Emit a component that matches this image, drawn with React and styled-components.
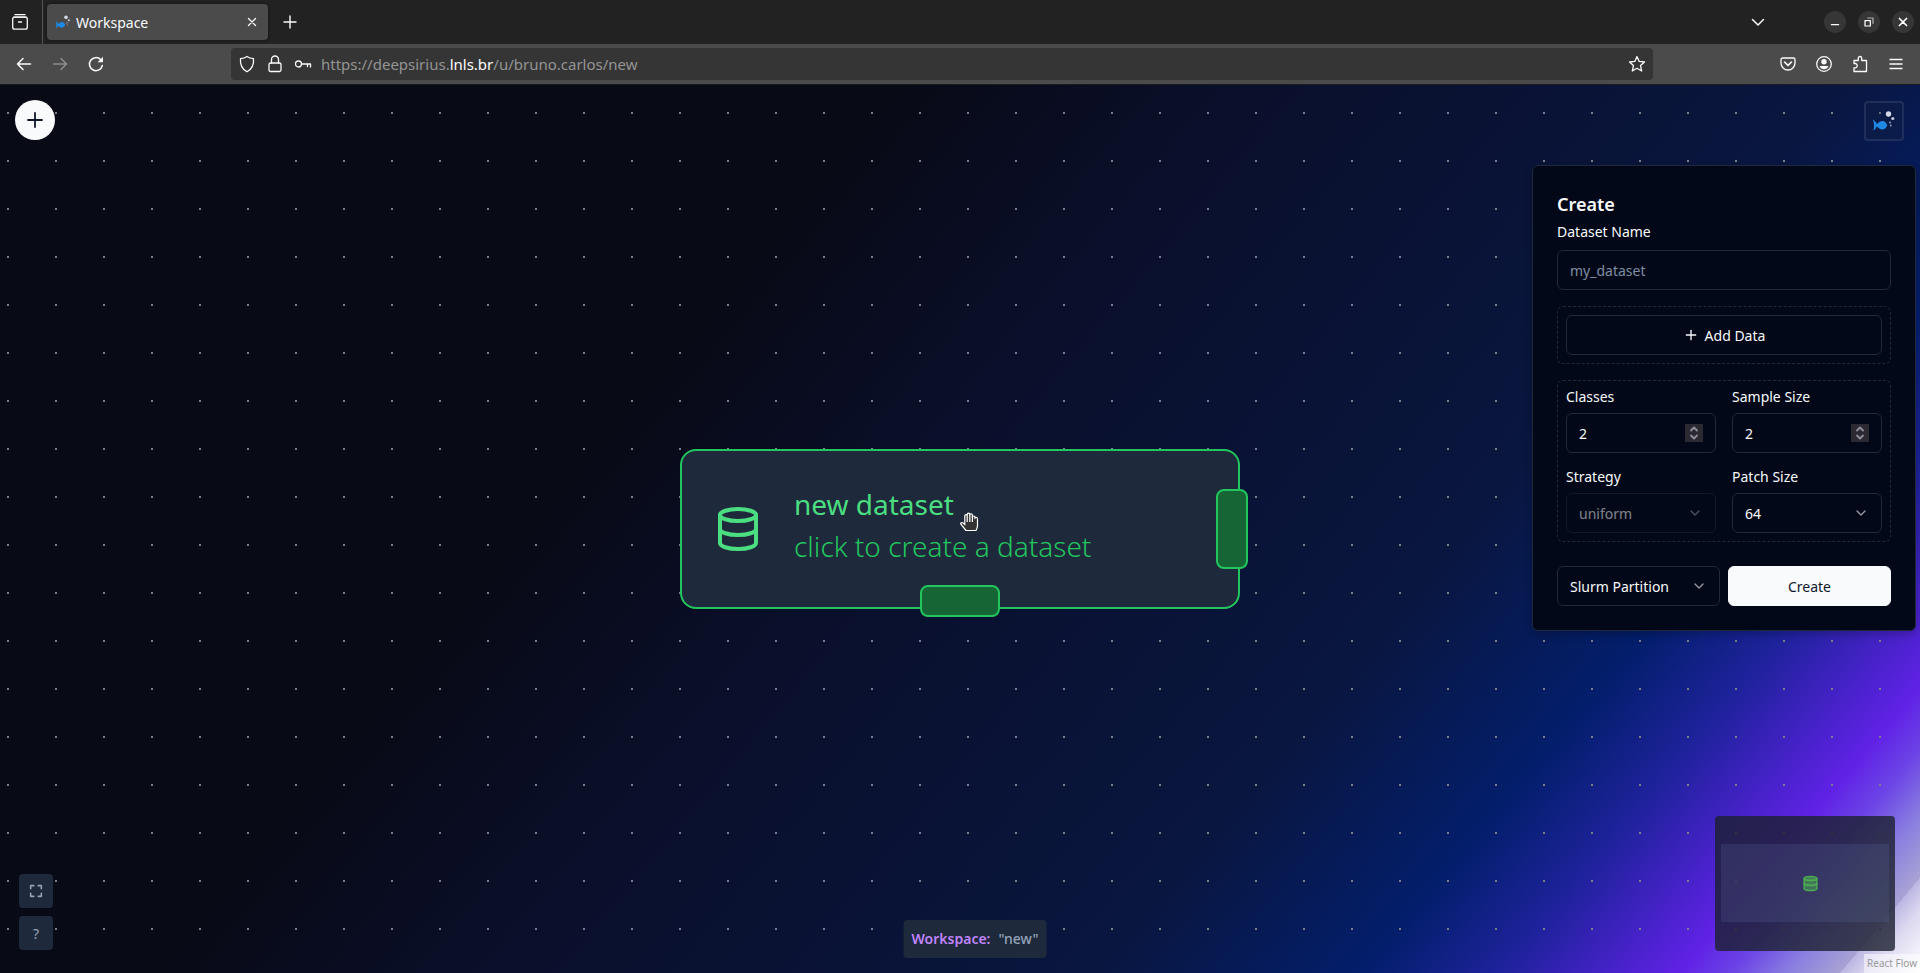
import React from "react";
import styled, { createGlobalStyle, css } from "styled-components";
import { ChevronDown, Database, Plus } from "lucide-react";

const Global = createGlobalStyle`
  *, *::before, *::after { box-sizing: border-box; }
  body { margin: 0; background: #080a16; }
  body, button, input, select {
    font-family: "Noto Sans", "Open Sans", sans-serif;
    font-size: 14px;
  }
  button { cursor: pointer; }
  button, input, select { margin: 0; }
`;

const Window = styled.div`
  display: flex;
  flex-direction: column;
  min-height: 100vh;
  color: #f8fafc;
`;

/* ---------- browser chrome ---------- */

const TabBar = styled.header`
  display: flex;
  align-items: center;
  height: 44px;
  padding-right: 6px;
  background: #222222;
`;

const ChromeButton = styled.button`
  display: flex;
  align-items: center;
  justify-content: center;
  flex: none;
  width: ${(p) => p.$w || 36}px;
  height: 36px;
  padding: 0;
  border: 0;
  background: none;
  color: ${(p) => (p.$dim ? "#8d8d8d" : "#fbfbfe")};
`;

const FirefoxView = styled.div`
  display: flex;
  align-items: center;
  justify-content: center;
  width: 43px;
  height: 44px;
  padding-right: 2px;
  border-right: 1px solid #555555;
`;

const Tab = styled.div`
  display: flex;
  align-items: center;
  width: 221px;
  height: 36px;
  margin-left: 4px;
  padding-left: 8px;
  border-radius: 4px;
  background: #4b4b4b;
  box-shadow: 0 0 3px #101010;
`;

const TabTitle = styled.span`
  flex: 1;
  margin-left: 5px;
`;

const Spacer = styled.div`
  flex: 1;
`;

const WindowControls = styled.div`
  display: flex;
  gap: 12px;
  margin-left: 48px;
`;

const WindowButton = styled.button`
  display: flex;
  align-items: center;
  justify-content: center;
  width: 22px;
  height: 22px;
  padding: 0;
  border: 0;
  border-radius: 50%;
  background: #363636;
  color: #ffffff;
`;

const Toolbar = styled.nav`
  display: flex;
  align-items: center;
  height: 41px;
  padding: 0 6px;
  border-bottom: 1px solid #1b1b1f;
  background: #4b4b4b;
`;

const UrlBar = styled.div`
  display: flex;
  align-items: center;
  flex: 1;
  height: 32px;
  margin: 0 117px;
  padding: 0 2px;
  border-radius: 4px;
  background: #353535;
`;

const Url = styled.div`
  flex: 1;
  font-size: 15px;
  line-height: 20px;
  margin-left: 4px;
  color: #949494;

  b {
    font-weight: 400;
    color: #fbfbfe;
  }
`;

/* ---------- canvas ---------- */

const Canvas = styled.main`
  position: relative;
  flex: 1;
  min-height: 640px;
  overflow: hidden;
  background:
    radial-gradient(circle at 1px 1px, #7d7e8c 1px, transparent 1px) 7px 27px / 48px 48px,
    linear-gradient(
      130deg,
      #080a16 0%,
      #080a16 34%,
      #0a0f2a 46%,
      #09163f 69%,
      #031e6b 79%,
      #1c2299 84%,
      #6022e6 91%,
      #6c45e6 93%,
      #8a7ee0 95%,
      #a8a3d4 97%,
      #bbb6e2 97%,
      #dcd8f0 98%,
      #ffffff 100%
    );
`;

const AddNode = styled.button`
  position: absolute;
  top: 15px;
  left: 15px;
  display: flex;
  align-items: center;
  justify-content: center;
  width: 40px;
  height: 40px;
  padding: 0;
  border: 0;
  border-radius: 50%;
  background: #f8fafc;
  color: #0f172a;
`;

const LogoButton = styled.button`
  position: absolute;
  top: 16px;
  right: 16px;
  display: flex;
  align-items: center;
  justify-content: center;
  width: 40px;
  height: 40px;
  padding: 0;
  border: 2px solid rgba(51, 65, 110, 0.5);
  border-radius: 4px;
  background: rgba(30, 41, 59, 0.2);
`;

const Node = styled.section`
  position: absolute;
  top: 50%;
  left: 50%;
  display: flex;
  align-items: center;
  gap: 32px;
  width: 560px;
  height: 160px;
  margin: -80px 0 0 -280px;
  padding: 0 32px;
  border: 2px solid #22c55e;
  border-radius: 16px;
  background: #1e293b;
  color: #4ade80;
`;

const NodeText = styled.div`
  padding-bottom: 8px;
  font-size: 28px;
  line-height: 42px;
`;

const NodeTitle = styled.div`
  font-weight: 400;
`;

const NodeHint = styled.div`
  font-weight: 300;
  color: #22c55e;
`;

const Handle = styled.span`
  position: absolute;
  border: 2px solid #22c55e;
  border-radius: 8px;
  background: #166534;
  ${(p) =>
    p.$side === "right"
      ? css`
          top: 38px;
          right: -10px;
          width: 32px;
          height: 80px;
        `
      : css`
          bottom: -10px;
          left: 238px;
          width: 80px;
          height: 32px;
        `}
`;

const Pointer = styled.svg`
  position: absolute;
  top: 61px;
  left: 277px;
`;

const Controls = styled.div`
  position: absolute;
  bottom: 23px;
  left: 19px;
  display: flex;
  flex-direction: column;
  gap: 8px;
`;

const ControlButton = styled.button`
  display: flex;
  align-items: center;
  justify-content: center;
  width: 34px;
  height: 34px;
  padding: 0;
  border: 0;
  border-radius: 4px;
  background: #1e293b;
  color: #94a3b8;
`;

const WorkspaceBadge = styled.div`
  position: absolute;
  bottom: 15px;
  left: 50%;
  display: flex;
  gap: 8px;
  margin-left: 15px;
  padding: 9px 8px;
  border-radius: 4px;
  background: #1e293b;
  color: #94a3b8;
  font-weight: 500;
  line-height: 20px;
  white-space: nowrap;
  transform: translateX(-50%);

  strong {
    font-weight: 600;
    color: #c084fc;
  }
`;

const MiniMap = styled.div`
  position: absolute;
  right: 25px;
  bottom: 22px;
  display: flex;
  align-items: center;
  width: 180px;
  height: 135px;
  padding: 0 6px 2px;
  border-radius: 4px;
  background: rgba(28, 32, 48, 0.8);
`;

const MiniView = styled.div`
  display: flex;
  align-items: center;
  justify-content: center;
  flex: 1;
  height: 78px;
  padding: 2px 0 0 10px;
  background: rgba(100, 116, 170, 0.2);
  color: #4caf50;
`;

const Attribution = styled.a`
  position: absolute;
  right: 0;
  bottom: 0;
  padding: 2px 3px;
  background: rgba(255, 255, 255, 0.5);
  color: #999999;
  font-size: 10px;
  line-height: 15px;
  text-decoration: none;
`;

/* ---------- create panel ---------- */

const Panel = styled.form`
  position: absolute;
  top: 80px;
  right: 4px;
  width: 384px;
  padding: 24px;
  border: 1px solid #1e293b;
  border-radius: 6px;
  background: #020817;
  box-shadow: 0 4px 8px rgba(0, 0, 0, 0.2);
`;

const PanelTitle = styled.h2`
  margin: 0 0 4px;
  font-size: 18px;
  font-weight: 600;
  line-height: 28px;
`;

const Label = styled.label`
  display: block;
  margin-bottom: 8px;
  line-height: ${(p) => (p.$compact ? 16 : 20)}px;
`;

const control = css`
  display: block;
  width: 100%;
  height: 40px;
  padding: 0 12px;
  border: 1px solid #1e293b;
  border-radius: 6px;
  background: #020817;
  color: #f8fafc;
`;

const Input = styled.input`
  ${control}
  appearance: textfield;

  &::-webkit-inner-spin-button {
    appearance: none;
    margin: 0;
  }
  &::placeholder {
    color: #7f8ea3;
  }
`;

const Select = styled.select`
  ${control}
  appearance: none;
  opacity: 1;
`;

const Field = styled.div`
  position: relative;
  opacity: ${(p) => (p.$disabled ? 0.5 : 1)};

  > svg {
    position: absolute;
    top: 12px;
    right: 13px;
    opacity: 0.6;
    pointer-events: none;
  }
`;

const Stepper = styled.span`
  position: absolute;
  top: 11px;
  right: 13px;
  display: flex;
  width: 18px;
  height: 18px;
  background: #2b2a33;
  color: #8f8f9d;
`;

const DashedBox = styled.div`
  margin-top: 16px;
  padding: 8px;
  border: 1px dashed #1e293b;
  border-radius: 6px;
`;

const FieldGrid = styled(DashedBox)`
  display: grid;
  grid-template-columns: 1fr 1fr;
  gap: 16px;
`;

const Button = styled.button`
  display: flex;
  align-items: center;
  justify-content: center;
  gap: 6px;
  width: 100%;
  height: 40px;
  padding: 0;
  border: 1px solid ${(p) => (p.$primary ? "#f8fafc" : "#1e293b")};
  border-radius: 6px;
  background: ${(p) => (p.$primary ? "#f8fafc" : "#020817")};
  color: ${(p) => (p.$primary ? "#0f172a" : "#f8fafc")};
`;

const Actions = styled.div`
  display: grid;
  grid-template-columns: 1fr 1fr;
  gap: 8px;
  margin-top: 24px;
`;

/* ---------- drawings ---------- */

const Icon = ({ size = 18, sw = 1.3, children }) => (
  <svg
    width={size}
    height={size}
    viewBox="0 0 18 18"
    fill="none"
    stroke="currentColor"
    strokeWidth={sw}
    strokeLinecap="round"
    strokeLinejoin="round"
    aria-hidden="true"
  >
    {children}
  </svg>
);

const Fish = ({ size }) => (
  <svg width={size} height={size} viewBox="0 0 24 24" aria-hidden="true">
    <path
      d="M1 10.500c1.500 1 3 2.500 3.800 4.500C6.500 13.500 8 12 10.500 12c2.300 0 4 2 4.800 4.300-.8 2.200-2.500 4.200-4.800 4.200-2.500 0-4-1.500-5.700-3-.6 1.500-1.800 3-3.300 4 .8-3.500.8-7.500-.5-11z"
      fill="#1e88e5"
    />
    <circle cx="16.500" cy="5" r="2.700" fill="#d5d9e4" />
    <circle cx="20.800" cy="9.500" r="1.600" fill="#c3c9d8" />
    <circle cx="18" cy="13.500" r="1" fill="#97a1ba" />
    <circle cx="18.800" cy="16.500" r="0.900" fill="#97a1ba" />
  </svg>
);

function TabStrip() {
  return (
    <TabBar>
      <FirefoxView>
        <Icon>
          <path d="M4 1.700h10M2.700 4.200h12.600" />
          <rect x="1.700" y="4.200" width="14.600" height="12" rx="2" />
          <path d="M7.500 9h3" />
        </Icon>
      </FirefoxView>
      <Tab>
        <Fish size={16} />
        <TabTitle>Workspace</TabTitle>
        <ChromeButton $w={32} aria-label="Close tab">
          <Icon size={16} sw={1.4}>
            <path d="M5 5l8 8M13 5l-8 8" />
          </Icon>
        </ChromeButton>
      </Tab>
      <ChromeButton $w={43} aria-label="New tab">
        <Icon sw={1.4}>
          <path d="M9 3v12M3 9h12" />
        </Icon>
      </ChromeButton>
      <Spacer />
      <ChromeButton aria-label="List all tabs">
        <Icon sw={1.5}>
          <path d="M3.500 6.500L9 12l5.500-5.500" />
        </Icon>
      </ChromeButton>
      <WindowControls>
        <WindowButton aria-label="Minimize">
          <Icon size={16} sw={1.4}>
            <path d="M5 12h8" />
          </Icon>
        </WindowButton>
        <WindowButton aria-label="Restore">
          <Icon size={16} sw={1.4}>
            <path d="M4.500 7.500h6v6h-6z" />
            <path d="M7.500 4.500h6v6" opacity="0.6" />
          </Icon>
        </WindowButton>
        <WindowButton aria-label="Close window">
          <Icon size={16} sw={1.8}>
            <path d="M5 5l8 8M13 5l-8 8" />
          </Icon>
        </WindowButton>
      </WindowControls>
    </TabBar>
  );
}

function NavBar() {
  return (
    <Toolbar>
      <ChromeButton aria-label="Back">
        <Icon sw={1.5}>
          <path d="M15.500 9h-13M8 3.500L2.500 9 8 14.500" />
        </Icon>
      </ChromeButton>
      <ChromeButton $dim aria-label="Forward">
        <Icon sw={1.5}>
          <path d="M2.500 9h13M10 3.500L15.500 9 10 14.500" />
        </Icon>
      </ChromeButton>
      <ChromeButton aria-label="Reload">
        <Icon sw={1.5}>
          <path d="M15.300 10.500A6.500 6.500 0 1 1 13.800 4.800" />
          <path d="M16 1.800v5.400h-5.400z" fill="currentColor" stroke="none" />
        </Icon>
      </ChromeButton>
      <UrlBar>
        <ChromeButton $w={28} aria-label="Tracking protection">
          <Icon>
            <path d="M9 1.500c2 1.500 4 2 6.500 2.200C16 9 14 14 9 16.800 4 14 2 9 2.500 3.700 5 3.500 7 3 9 1.500z" />
          </Icon>
        </ChromeButton>
        <ChromeButton $w={28} aria-label="Connection secure">
          <Icon>
            <rect x="3" y="8" width="12" height="8.500" rx="1.500" />
            <path d="M5.500 8V4.500a3.500 3.500 0 0 1 7 0V8" />
          </Icon>
        </ChromeButton>
        <ChromeButton $w={28} aria-label="Saved login">
          <Icon>
            <circle cx="4.500" cy="9" r="3" />
            <path d="M7.500 9h9v3M13.500 9v2.500" />
          </Icon>
        </ChromeButton>
        <Url>
          https://deepsirius.<b>lnls.br</b>/u/bruno.carlos/new
        </Url>
        <ChromeButton $w={28} aria-label="Bookmark this page">
          <Icon>
            <path d="M9 1.500l2.200 4.900 5.300.6-4 3.600 1.200 5.400L9 13.300 4.300 16l1.200-5.400-4-3.600 5.300-.6z" />
          </Icon>
        </ChromeButton>
      </UrlBar>
      <ChromeButton aria-label="Save to Pocket">
        <Icon>
          <path d="M3.500 3h11A1.500 1.500 0 0 1 16 4.500V8a7 7 0 0 1-14 0V4.500A1.500 1.500 0 0 1 3.500 3z" />
          <path d="M5.500 7L9 10.300 12.500 7" strokeWidth="1.600" />
        </Icon>
      </ChromeButton>
      <ChromeButton aria-label="Account">
        <Icon>
          <circle cx="9" cy="9" r="7.300" />
          <circle cx="9" cy="6.800" r="2.700" fill="currentColor" stroke="none" />
          <path d="M4.500 11h9c-.7 2-2.500 3.300-4.500 3.300S5.200 13 4.500 11z" fill="currentColor" stroke="none" />
        </Icon>
      </ChromeButton>
      <ChromeButton aria-label="Extensions">
        <Icon>
          <path d="M3 8V5.500h4.300V3.200a1.700 1.700 0 0 1 3.400 0v2.300h4.800v11H3v-3.700h1.500a2.200 2.200 0 0 0 0-4.300H3z" />
        </Icon>
      </ChromeButton>
      <ChromeButton aria-label="Menu">
        <Icon sw={1.4}>
          <path d="M3 4.500h12M3 9h12M3 13.500h12" />
        </Icon>
      </ChromeButton>
    </Toolbar>
  );
}

function NumberField({ id, label, value }) {
  return (
    <div>
      <Label $compact htmlFor={id}>{label}</Label>
      <Field>
        <Input id={id} type="number" defaultValue={value} />
        <Stepper aria-hidden="true">
          <Icon sw={1.8}>
            <path d="M6 6.500l3-3 3 3M6 11.500l3 3 3-3" />
          </Icon>
        </Stepper>
      </Field>
    </div>
  );
}

function SelectField({ id, label, value, disabled }) {
  return (
    <div>
      <Label $compact htmlFor={id}>{label}</Label>
      <Field $disabled={disabled}>
        <Select id={id} disabled={disabled}>
          <option>{value}</option>
        </Select>
        <ChevronDown size={16} aria-hidden="true" />
      </Field>
    </div>
  );
}

function CreatePanel() {
  return (
    <Panel onSubmit={(e) => e.preventDefault()}>
      <PanelTitle>Create</PanelTitle>
      <Label htmlFor="name">Dataset Name</Label>
      <Input id="name" type="text" placeholder="my_dataset" />
      <DashedBox>
        <Button type="button">
          <Plus size={16} aria-hidden="true" />
          Add Data
        </Button>
      </DashedBox>
      <FieldGrid>
        <NumberField id="classes" label="Classes" value={2} />
        <NumberField id="samples" label="Sample Size" value={2} />
        <SelectField id="strategy" label="Strategy" value="uniform" disabled />
        <SelectField id="patch" label="Patch Size" value="64" />
      </FieldGrid>
      <Actions>
        <Field>
          <Select aria-label="Slurm Partition">
            <option>Slurm Partition</option>
          </Select>
          <ChevronDown size={16} aria-hidden="true" />
        </Field>
        <Button $primary type="submit">Create</Button>
      </Actions>
    </Panel>
  );
}

function DatasetNode() {
  return (
    <Node>
      <Database size={48} aria-hidden="true" />
      <NodeText>
        <NodeTitle>new dataset</NodeTitle>
        <NodeHint>click to create a dataset</NodeHint>
      </NodeText>
      <Handle $side="right" />
      <Handle $side="bottom" />
      <Pointer width="20" height="20" viewBox="0 0 20 20" aria-hidden="true">
        <path
          d="M7 18.500L2 12.500c-1-1.500.7-2.500 2-1.500l1.800 1.500V4c0-1.800 2.400-1.800 2.400 0V2.500c0-1.800 2.600-1.800 2.600 0V3c0-1.500 2.600-1.500 2.600.3V5c0-1.400 2.600-1.400 2.600.4V6c1-1 2.500-.5 2.500 1v6.500c0 2-.8 3-1.500 5z"
          fill="#333333"
          stroke="#ffffff"
          strokeWidth="1.200"
        />
        <path d="M8.200 4v6M10.800 3v7M13.400 4v6" stroke="#ffffff" strokeWidth="1.200" />
      </Pointer>
    </Node>
  );
}

export default function App() {
  return (
    <Window>
      <Global />
      <TabStrip />
      <NavBar />
      <Canvas>
        <AddNode aria-label="Add node">
          <Plus size={24} strokeWidth={1.8} aria-hidden="true" />
        </AddNode>
        <LogoButton aria-label="DeepSirius">
          <Fish size={24} />
        </LogoButton>
        <DatasetNode />
        <CreatePanel />
        <Controls>
          <ControlButton aria-label="Fit view">
            <Icon size={16} sw={1.8}>
              <path d="M3 6.500V3h3.500M11.500 3H15v3.500M15 11.500V15h-3.500M6.500 15H3v-3.500" />
            </Icon>
          </ControlButton>
          <ControlButton aria-label="Help">?</ControlButton>
        </Controls>
        <WorkspaceBadge>
          <strong>Workspace:</strong>
          <span>"new"</span>
        </WorkspaceBadge>
        <MiniMap>
          <MiniView>
            <Database size={17} fill="rgba(76, 175, 80, 0.5)" aria-hidden="true" />
          </MiniView>
        </MiniMap>
        <Attribution href="#react-flow">React Flow</Attribution>
      </Canvas>
    </Window>
  );
}
